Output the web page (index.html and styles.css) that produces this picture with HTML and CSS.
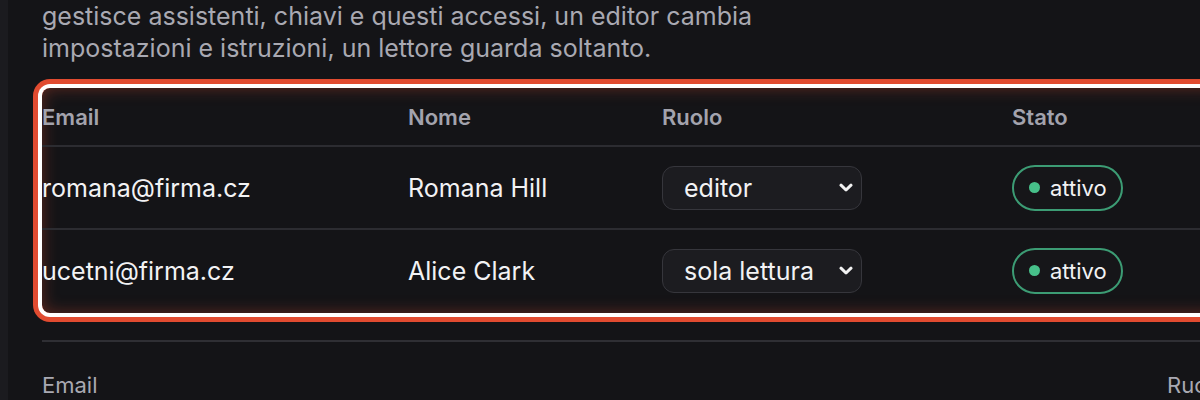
FILE: index.html
```html
<!DOCTYPE html>
<html lang="it">
<head>
<meta charset="utf-8">
<link rel="stylesheet" href="styles.css">
</head>
<body>
<div class="rail"></div>
<main class="main">
  <p class="intro">gestisce assistenti, chiavi e questi accessi, un editor cambia<br>impostazioni e istruzioni, un lettore guarda soltanto.</p>
  <div class="focus">
    <table class="members">
      <colgroup>
        <col class="c-email"><col class="c-name"><col class="c-role"><col class="c-state">
      </colgroup>
      <thead>
        <tr><th>Email</th><th>Nome</th><th>Ruolo</th><th>Stato</th></tr>
      </thead>
      <tbody>
        <tr>
          <td>romana@firma.cz</td>
          <td>Romana Hill</td>
          <td><div class="select"><span>editor</span><svg class="chev" viewBox="0 0 14 10" width="14" height="10"><path d="M2 2.2 L7 7 L12 2.2" fill="none" stroke="#f2f2f2" stroke-width="3" stroke-linecap="round" stroke-linejoin="round"/></svg></div></td>
          <td><span class="badge"><span class="dot"></span>attivo</span></td>
        </tr>
        <tr class="last">
          <td>ucetni@firma.cz</td>
          <td>Alice Clark</td>
          <td><div class="select"><span>sola lettura</span><svg class="chev" viewBox="0 0 14 10" width="14" height="10"><path d="M2 2.2 L7 7 L12 2.2" fill="none" stroke="#f2f2f2" stroke-width="3" stroke-linecap="round" stroke-linejoin="round"/></svg></div></td>
          <td><span class="badge"><span class="dot"></span>attivo</span></td>
        </tr>
      </tbody>
    </table>
  </div>
  <div class="next">
    <div class="next-head"><span class="nh-email">Email</span><span class="nh-role">Ruolo</span></div>
  </div>
</main>
</body>
</html>
```
FILE: styles.css
```css
html, body {
  margin: 0;
  padding: 0;
  height: 100%;
  overflow: hidden;
  background: #141417;
}
body {
  display: flex;
  font-family: Inter, "Noto Sans", sans-serif;
  color: #f2f2f4;
}
.rail {
  width: 8px;
  flex: 0 0 8px;
  background: #1b1b1f;
}
.main {
  flex: 1 0 auto;
  width: 1400px;
  padding-left: 34px;
  box-sizing: border-box;
}
.intro {
  margin: 0;
  font-size: 25px;
  line-height: 32px;
  color: #a9a9b2;
}
.focus {
  margin-top: 24px;
  width: 1300px;
  border-radius: 8px;
  box-shadow: 0 0 0 4px #ffffff, 0 0 0 9px #e14b30, inset 0 0 16px rgba(225, 75, 48, 0.38);
}
.members {
  border-collapse: collapse;
  width: 1300px;
  table-layout: fixed;
  font-size: 25px;
}
.c-email { width: 366px; }
.c-name { width: 254px; }
.c-role { width: 350px; }
.members th {
  text-align: left;
  font-size: 22px;
  font-weight: 600;
  color: #a3a3ad;
  height: 57px;
  padding: 0;
  border-bottom: 2px solid #2c2c31;
  vertical-align: middle;
}
.members td {
  padding: 0;
  height: 81px;
  vertical-align: middle;
}
.members tr.last td {
  padding-bottom: 2px;
}
.members tbody tr:first-child td {
  border-bottom: 2px solid #2c2c31;
}
.select {
  width: 200px;
  height: 44px;
  box-sizing: border-box;
  border: 1px solid #36363c;
  border-radius: 12px;
  background: #1c1c20;
  display: flex;
  align-items: center;
  justify-content: space-between;
  padding: 0 7px 0 21px;
}
.chev { margin-right: 1px; }
.badge {
  display: inline-flex;
  align-items: center;
  gap: 10px;
  height: 46px;
  box-sizing: border-box;
  padding: 0 14px 0 15px;
  border: 2px solid #3c9c74;
  border-radius: 23px;
  font-size: 22px;
  background: #161619;
}
.dot {
  width: 11px;
  height: 11px;
  border-radius: 50%;
  background: #47c08a;
}
.next {
  margin-top: 27px;
  border-top: 2px solid #2f2f34;
}
.next-head {
  display: flex;
  padding-top: 30px;
  font-size: 22px;
  color: #a9a9b2;
}
.nh-email { width: 1125px; }
```
